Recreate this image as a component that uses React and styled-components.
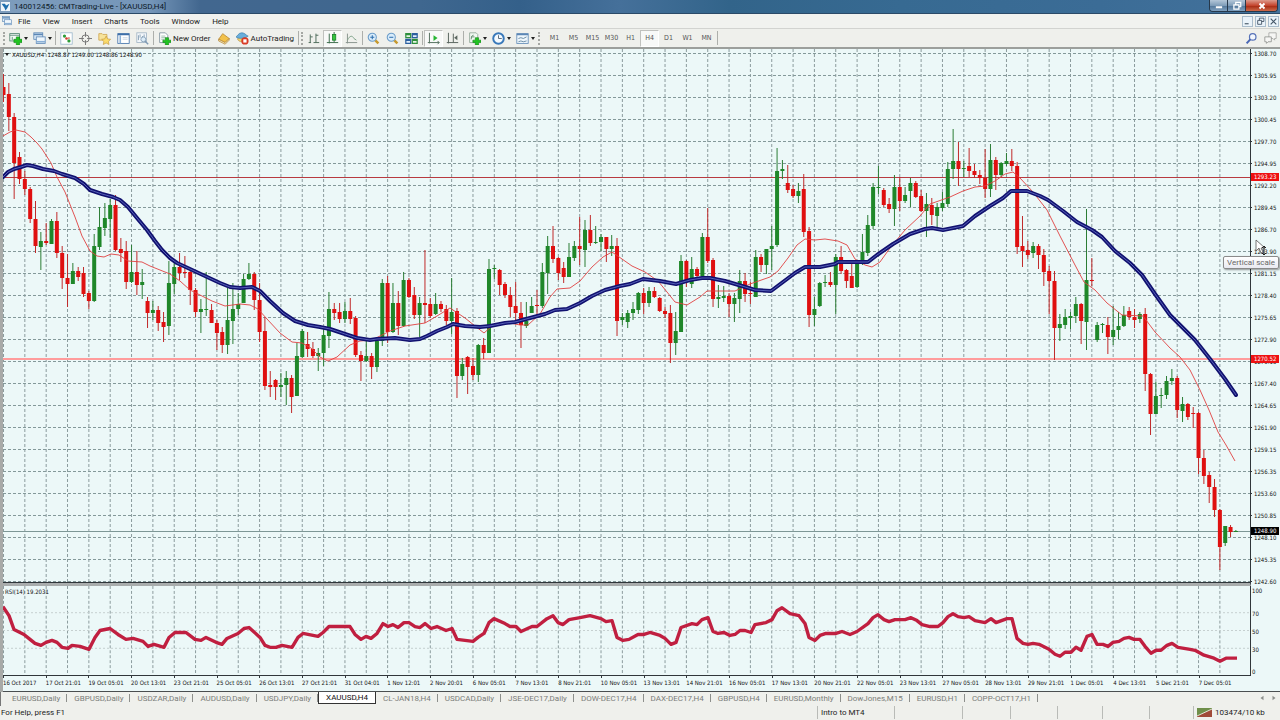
import React from 'react';
import styled, { createGlobalStyle } from 'styled-components';

const FACE = '#eff0ec';
const PAPER = '#ecf8f8';
const UI_FONT = "Roboto, 'Noto Sans', sans-serif";
const CHART_FONT = "'DejaVu Sans Condensed', 'DejaVu Sans', sans-serif";

const GlobalStyle = createGlobalStyle`
  * {
    box-sizing: border-box;
  }
  body {
    margin: 0;
    background: ${FACE};
    font-family: ${UI_FONT};
    font-size: 8px;
    color: #1c1c1c;
  }
  button {
    font: inherit;
    color: inherit;
    border: 0;
    padding: 0;
    background: none;
  }
  ul, ol {
    list-style: none;
    margin: 0;
    padding: 0;
  }
  svg {
    display: block;
  }
`;

// candle spacing on the chart, eight candles to one date label
const STEP = 5.335;
const FIRST_X = 3.5;

const PRICES = [
  '1308.70', '1305.95', '1303.20', '1300.45', '1297.70', '1294.95', '1292.20',
  '1289.45', '1286.70', '1283.90', '1281.15', '1278.40', '1275.65', '1272.90',
  '1270.15', '1267.40', '1264.65', '1261.90', '1259.15', '1256.35', '1253.60',
  '1250.85', '1248.10', '1245.35', '1242.60',
];

const DATES = [
  '16 Oct 2017', '17 Oct 21:01', '19 Oct 05:01', '20 Oct 13:01', '23 Oct 21:01',
  '25 Oct 05:01', '26 Oct 13:01', '27 Oct 21:01', '31 Oct 04:01', '1 Nov 12:01',
  '2 Nov 20:01', '6 Nov 05:01', '7 Nov 13:01', '8 Nov 21:01', '10 Nov 05:01',
  '13 Nov 13:01', '14 Nov 21:01', '16 Nov 05:01', '17 Nov 13:01', '20 Nov 21:01',
  '22 Nov 05:01', '23 Nov 13:01', '27 Nov 05:01', '28 Nov 13:01', '29 Nov 21:01',
  '1 Dec 05:01', '4 Dec 13:01', '5 Dec 21:01', '7 Dec 05:01',
];

// direction, high, body top, body bottom, low
const CANDLES = `
r 74 87 95 102|r 83 94 117 131|r 113 117 163 199|r 152 157 179 184|r 171 179 189 195|r 187 189 219 223
r 201 219 246 253|g 232 241 247 270|r 223 241 243 245|g 219 221 244 244|r 212 221 253 258|r 246 253 278 289
r 254 278 284 307|g 263 271 284 284|r 267 271 277 281|r 267 273 294 297|r 291 293 301 309|g 234 246 301 302
g 207 227 247 250|g 203 218 228 236|g 199 205 219 238|r 195 205 250 251|r 238 249 253 262|r 241 251 282 289
g 245 272 282 283|r 251 272 285 295|g 269 282 285 299|r 297 301 313 328|g 301 310 313 320|r 306 310 323 331
r 312 322 327 342|g 261 283 326 335|g 262 267 284 294|r 253 267 273 280|r 256 272 273 278|r 271 272 290 305
r 288 290 312 317|g 299 309 312 333|g 272 309 310 316|r 304 310 323 323|r 320 323 333 350|r 327 332 345 353
g 288 320 345 354|g 283 309 321 344|g 293 304 309 315|g 274 279 303 303|g 263 274 279 280|r 272 274 300 310
r 283 300 332 342|r 317 331 386 390|r 371 385 387 397|r 379 380 387 400|g 373 385 387 397|g 371 378 385 405
r 375 378 397 413|g 343 356 396 396|g 329 331 357 358|r 332 344 349 357|r 342 349 356 358|g 348 353 356 371
g 328 335 353 366|g 292 309 336 348|r 303 309 313 320|r 303 312 319 323|g 302 311 319 323|r 298 311 319 324
r 316 318 355 357|r 351 355 361 381|g 340 356 361 362|r 353 356 367 379|g 339 341 367 372|g 279 283 341 346
r 276 283 332 343|g 283 303 332 333|r 291 303 326 335|g 272 280 326 327|r 278 280 297 298|r 287 295 315 319
g 297 303 315 337|r 250 303 305 323|r 298 304 316 318|g 293 304 314 315|r 301 304 309 312|r 305 309 321 325
g 278 312 321 334|r 308 311 376 398|g 358 364 376 380|r 356 357 367 394|r 358 366 375 380|g 344 345 375 382
r 338 345 353 359|g 259 269 353 353|g 265 268 269 279|r 269 270 285 295|r 282 284 295 298|r 287 295 307 317
r 282 306 313 323|r 302 313 325 348|g 302 321 326 328|g 297 306 313 313|r 290 305 306 315|g 263 272 306 308
g 236 246 273 294|r 226 246 259 263|r 257 258 273 280|r 262 268 277 283|g 243 257 277 277|g 241 246 258 261
r 217 246 249 265|g 220 230 250 267|r 215 230 243 246|g 226 242 243 244|g 234 237 242 251|r 237 237 249 262
g 235 246 249 256|r 238 246 321 336|g 313 317 320 325|g 310 313 322 328|g 302 309 313 320|g 292 293 310 314
r 288 293 303 314|g 287 291 303 307|r 287 291 297 298|r 297 298 311 312|r 307 311 314 318|r 305 313 343 363
g 312 331 343 355|g 255 261 332 332|r 260 261 282 287|g 257 269 284 288|r 267 269 276 277|g 233 237 276 277
r 208 237 261 263|r 258 260 299 307|g 285 297 299 308|g 286 296 298 302|r 293 296 304 317|g 293 298 304 322
g 270 281 299 313|r 273 281 294 302|r 282 293 294 304|g 250 257 297 297|r 254 257 265 272|g 249 249 265 274
g 226 246 249 270|g 148 171 245 247|g 160 169 171 179|r 165 183 190 193|r 185 189 196 198|g 183 191 196 203
r 174 189 232 237|r 227 231 315 327|g 297 309 315 326|g 282 283 306 307|g 275 282 283 287|r 272 282 285 287
g 254 257 285 314|r 246 257 271 274|r 269 270 281 288|r 263 276 288 288|g 262 263 287 288|g 234 252 263 265
g 215 225 253 256|g 183 187 226 229|g 166 187 188 194|r 188 190 205 207|r 198 204 209 213|g 175 187 209 226
r 177 187 201 211|g 187 195 201 203|g 178 183 191 207|r 181 183 197 198|r 190 196 211 212|g 193 204 211 237
r 198 205 215 225|g 203 207 216 229|g 192 203 208 211|g 162 169 204 207|g 129 161 169 179|r 142 161 169 186
g 161 168 169 177|r 148 166 171 177|r 164 171 175 178|r 170 175 178 184|r 149 178 189 198|g 144 160 189 197
r 157 160 175 190|g 162 163 175 177|g 153 161 164 166|r 149 161 166 171|r 162 166 247 254|r 216 246 251 267
r 241 250 255 259|g 242 246 253 258|r 244 246 255 269|r 249 255 272 286|r 266 271 281 314|r 271 281 328 360
g 314 324 328 341|g 309 317 325 329|g 312 316 318 329|g 297 304 316 323|r 303 304 321 344|g 209 280 322 350
r 258 280 281 286|g 322 325 340 342|g 323 324 325 333|r 317 325 337 354|g 306 330 337 345|g 312 326 330 339
g 306 315 326 327|r 307 311 317 320|r 309 317 320 328|g 312 314 319 323|r 308 314 374 391|r 373 374 414 435
g 382 396 414 414|g 388 395 396 408|g 376 381 395 399|g 369 378 381 385|r 376 378 410 418|g 397 404 411 422
r 403 404 417 420|r 407 413 414 428|r 412 413 458 474|r 450 458 476 484|r 472 475 487 503|r 479 487 510 517
r 509 510 547 570|g 526 526 543 546|r 525 527 532 537|g 530 531 532 532
`
  .trim()
  .split(/[|\n]/)
  .map((row) => {
    const [dir, ...values] = row.split(' ');
    const [high, top, bottom, low] = values.map(Number);
    return { up: dir === 'g', high, top, bottom, low };
  });

const SLOW_MA =
  '3,177 8,172 14,169 21,167 27,165 33,166 43,169 54,171 62,174 75,178 84,184 90,190 102,194 113,197 120,200 128,207 137,218 147,230 155,241 162,250 170,258 177,263 190,269 205,276 220,283 230,287 240,288 252,287 260,291 270,301 283,313 295,321 308,325 320,327 330,329 345,334 357,338 370,340 377,339 395,338 410,340 420,339 427,336 437,331 447,327 453,324 465,326 480,327 490,326 505,323 515,322 530,318 545,314 555,310 567,309 580,303 592,296 605,290 620,286 630,284 643,279 660,281 676,284 690,280 702,278 710,278 725,281 742,286 755,290 771,291 783,282 795,273 805,267 820,267 835,264 838,262 860,262 868,262 877,255 893,244 910,234 925,229 932,228 943,230 963,226 975,216 990,206 1003,198 1011,191 1027,191 1040,196 1048,200 1063,211 1077,222 1092,230 1102,237 1115,251 1130,263 1142,275 1155,294 1170,315 1185,330 1195,340 1210,359 1225,379 1236,395';

const FAST_MA =
  '3,136 10,132 16,130 25,132 31,137 37,143 42,149 51,163 57,177 65,192 75,217 82,236 90,251 97,256 104,257 111,254 119,255 128,261 142,262 150,266 160,270 170,274 180,281 190,290 200,295 212,301 225,306 240,304 250,305 258,309 267,319 280,333 292,342 302,343 311,348 320,357 328,361 337,357 350,345 360,341 372,340 380,336 390,331 405,326 425,323 437,316 450,308 465,318 475,326 484,333 492,326 505,322 520,325 528,325 540,314 550,297 557,289 570,288 580,281 592,267 603,257 612,252 622,259 632,266 645,272 658,281 667,292 675,302 687,305 700,297 707,291 735,291 750,284 770,277 778,271 788,258 797,245 805,239 815,240 825,239 838,241 847,245 855,259 865,265 872,267 880,262 890,248 905,230 920,216 930,204 950,197 963,191 975,187 985,186 995,181 1005,174 1013,172 1020,178 1033,192 1047,210 1060,236 1075,265 1084,282 1095,290 1107,303 1122,315 1143,316 1155,332 1170,348 1180,357 1190,370 1200,390 1209,410 1218,432 1226,445 1235,461';

const RSI =
  '3,607 9,616 14,630 24,635 30,640 35,644 41,646 46,643 52,641 57,643 62,648 68,649 72,646 80,647 89,650 95,638 100,631 110,629 118,635 126,640 133,639 143,642 148,647 154,645 164,648 169,638 175,633 186,633 195,640 201,641 206,638 216,643 222,645 227,639 238,634 244,629 249,628 260,638 265,646 270,648 276,648 282,646 292,648 298,638 303,634 318,637 323,633 329,627 350,627 355,635 361,640 366,637 371,639 377,634 383,624 388,627 393,625 398,628 404,623 409,623 415,627 420,628 425,624 431,629 437,627 446,631 452,629 457,640 473,642 478,638 484,634 489,623 494,619 505,624 510,627 516,627 521,632 532,627 537,627 547,619 553,616 558,623 563,625 569,620 580,618 590,616 601,619 606,622 612,621 617,638 623,641 629,640 638,635 644,635 650,633 660,636 665,639 671,645 676,643 681,628 692,624 697,625 702,620 708,618 713,632 718,634 724,633 730,636 735,635 740,631 745,631 751,633 755,625 766,623 772,620 777,611 782,608 790,614 799,616 805,624 809,638 815,641 820,636 826,634 836,634 842,632 850,635 857,632 868,624 873,618 878,615 884,620 889,622 895,620 905,620 911,618 917,621 922,625 930,627 938,627 943,623 948,617 953,614 958,617 964,618 969,617 975,621 985,623 991,619 996,623 1007,619 1012,619 1017,639 1023,644 1028,645 1033,644 1039,645 1049,650 1055,655 1060,657 1065,653 1071,653 1076,648 1081,651 1087,637 1092,635 1097,645 1103,645 1108,647 1113,643 1119,642 1124,639 1129,638 1134,640 1140,640 1145,647 1151,654 1156,651 1161,651 1167,646 1172,644 1178,648 1190,650 1195,651 1204,656 1214,659 1220,662 1226,659 1237,659';

const MENU = ['File', 'View', 'Insert', 'Charts', 'Tools', 'Window', 'Help'];
const PERIODS = ['M1', 'M5', 'M15', 'M30', 'H1', 'H4', 'D1', 'W1', 'MN'];
const TABS = [
  'EURUSD,Daily', 'GBPUSD,Daily', 'USDZAR,Daily', 'AUDUSD,Daily', 'USDJPY,Daily',
  'XAUUSD,H4', 'CL-JAN18,H4', 'USDCAD,Daily', 'JSE-DEC17,Daily', 'DOW-DEC17,H4',
  'DAX-DEC17,H4', 'GBPUSD,H4', 'EURUSD,Monthly', 'DowJones,M15', 'EURUSD,H1',
  'COPP-OCT17,H1',
];

const Terminal = styled.div`
  min-height: 100vh;
  display: flex;
  flex-direction: column;
  background: ${FACE};
`;

const TitleBar = styled.header`
  height: 14px;
  display: flex;
  align-items: center;
  gap: 4px;
  padding-left: 1px;
  border-bottom: 1px solid #2b4a68;
  background: linear-gradient(90deg, #7d9cbc 0, #7596b9 150px, #42678f 200px, #3f678f 420px, #34608a 520px, #45709a 620px, #32648a 730px, #376a92 900px, #3b6c96 1100px, #44729c 100%);
`;

const Title = styled.h1`
  flex: 1;
  margin: 0;
  font-size: 8px;
  line-height: 13px;
  font-weight: 400;
  color: #0d1a28;
`;

const CaptionButtons = styled.div`
  align-self: flex-start;
  display: flex;
  height: 12px;
  margin-right: 2px;
  border: 1px solid #26384b;
  border-top: 0;
  border-radius: 0 0 4px 4px;
  overflow: hidden;
`;

const CaptionButton = styled.button`
  width: ${(p) => (p.$close ? 31 : 18)}px;
  display: grid;
  place-items: center;
  border-right: ${(p) => (p.$close ? 0 : '1px solid #26384b')};
  background: ${(p) =>
    p.$close
      ? 'linear-gradient(#dd9a8c, #c4452e 50%, #a82c14 55%, #cc6a4a)'
      : 'linear-gradient(#b3c6d8, #7f9db9 50%, #54789b 55%, #7fa0bf)'};
`;

const MenuBar = styled.nav`
  height: 14px;
  display: flex;
  align-items: center;
  padding-left: 2px;
  background: #f1f2ef;
`;

const MenuButton = styled.button`
  padding: 0 6px;
  line-height: 13px;
`;

const MenuItems = styled.div`
  flex: 1;
  display: flex;
`;

const ChildButtons = styled.div`
  display: flex;
  gap: 2px;
  padding-right: 1px;
`;

const ChildButton = styled.button`
  width: 11px;
  height: 11px;
  display: grid;
  place-items: center;
  border: 1px solid #a9bccb;
  background: #eaf3fa;
`;

const ToolBar = styled.div`
  height: 19px;
  display: flex;
  align-items: center;
  padding-left: 2px;
  border-top: 1px solid #d2d3d0;
  background: ${FACE};
`;

const Grip = styled.span`
  width: 2px;
  height: 13px;
  margin: 0 1px;
  border-left: 2px dotted #a5a7a3;
`;

const Divider = styled.span`
  width: 1px;
  height: 14px;
  margin: 0 1px;
  background: #adafab;
`;

const ToolButton = styled.button`
  width: ${(p) => (p.$menu ? 24 : 19)}px;
  height: 17px;
  display: flex;
  align-items: center;
  justify-content: center;
  gap: 2px;
  border: 1px solid ${(p) => (p.$pressed ? '#c0c1be' : 'transparent')};
  border-right-color: ${(p) => (p.$pressed ? '#ffffff' : 'transparent')};
  border-bottom-color: ${(p) => (p.$pressed ? '#ffffff' : 'transparent')};
  background: ${(p) => (p.$pressed ? '#f8f9f8' : 'none')};
`;

const PeriodGroup = styled.div`
  display: flex;
  padding-left: 4px;
`;

const PeriodButton = styled(ToolButton)`
  font-family: ${CHART_FONT};
  font-size: 7px;
  color: #555;
`;

const LabelButton = styled(ToolButton)`
  width: auto;
  padding: 0 2px;
  line-height: 15px;
`;

const Spacer = styled.span`
  flex: 1;
`;

const Arrow = styled.span`
  border: 2px solid transparent;
  border-top: 3px solid #222;
  border-bottom: 0;
`;

const ChartWindow = styled.main`
  position: relative;
  flex: 1;
  display: grid;
  grid-template-columns: minmax(0, 1fr) 29px;
  grid-template-rows: 1fr 90px 16px;
  border-top: 2px solid #9c9f9c;
  border-left: 3px solid #a8aaa8;
  background: ${PAPER};
  font-family: ${CHART_FONT};
  font-size: 6px;
  color: #111;
`;

const Pane = styled.section`
  position: relative;
  min-height: 0;
  border-right: 1px solid #30363a;
`;

const PricePane = styled(Pane)`
  border-bottom: 3px solid #a9adad;
  box-shadow: inset 0 -1px #30363a;
`;

const RsiPane = styled(Pane)`
  border-bottom: 1px solid #30363a;
`;

const Plot = styled.svg`
  width: 100%;
  height: 100%;
`;

const PaneLabel = styled.h2`
  position: absolute;
  top: 1px;
  left: 2px;
  display: flex;
  align-items: center;
  gap: 3px;
  margin: 0;
  font-size: 6px;
  line-height: 9px;
  font-weight: 400;
  white-space: pre;
`;

const PriceAxis = styled.ol`
  position: relative;
  display: flex;
  flex-direction: column;
  justify-content: space-between;
`;

const PriceTick = styled.li`
  display: flex;
  align-items: center;
  gap: 2px;
  line-height: 9px;

  &::before {
    content: '';
    width: 1px;
    height: 1px;
    background: #30363a;
  }
`;

const PriceTag = styled.span`
  position: absolute;
  left: 0;
  top: ${(p) => p.$at}%;
  width: 28px;
  padding-left: 3px;
  line-height: 8px;
  color: #fff;
  background: ${(p) => p.$color};
`;

const RsiAxis = styled.ol`
  display: grid;
  grid-template-rows: repeat(5, 1fr);
  align-items: center;
  padding-left: 1px;
  line-height: 9px;

  li:first-child {
    align-self: start;
  }
  li:last-child {
    align-self: end;
  }
`;

const DateAxis = styled.ol`
  grid-column: 1 / -1;
  display: flex;
  line-height: 10px;
  border-bottom: 1px solid #4a4e50;
`;

const DateTick = styled.li`
  flex: 0 0 3.345%;
  white-space: nowrap;

  &::before {
    content: '';
    display: block;
    width: 1px;
    height: 2px;
    background: #30363a;
  }
`;

const Tooltip = styled.div`
  position: absolute;
  right: 1px;
  top: 207px;
  padding: 0 3px;
  border: 1px solid #8a8a8a;
  border-radius: 2px;
  background: linear-gradient(#fff, #e9eaf1);
  box-shadow: 1px 1px 2px #0006;
  font-family: ${UI_FONT};
  font-size: 8px;
  line-height: 11px;
  color: #666;
`;

const Pointer = styled.svg`
  position: absolute;
  right: 13px;
  top: 190px;
`;

const TabStrip = styled.nav`
  height: 14px;
  display: flex;
  align-items: flex-start;
  padding-left: 4px;
  border-left: 1px solid #777;
`;

const Tab = styled.button`
  position: relative;
  height: 12px;
  padding: 0 7px;
  line-height: 11px;
  white-space: nowrap;
  color: ${(p) => (p.$active ? '#111' : '#7b7d7a')};
  background: ${(p) => (p.$active ? '#fff' : 'none')};
  border: 0 solid #333;
  border-width: ${(p) => (p.$active ? '0 1px 1px' : 0)};

  &::after {
    content: '';
    display: ${(p) => (p.$active ? 'none' : 'block')};
    position: absolute;
    right: 0;
    top: 2px;
    height: 8px;
    border-right: 1px solid #8d8f8c;
  }
`;

const StatusBar = styled.footer`
  height: 14px;
  display: flex;
  align-items: flex-start;
  line-height: 13px;
`;

const StatusCell = styled.span`
  flex: ${(p) => (p.$width ? `0 0 ${p.$width}px` : 1)};
  height: 13px;
  display: flex;
  align-items: center;
  gap: 3px;
  padding-left: ${(p) => (p.$width ? 3 : 1)}px;
  border-left: ${(p) => (p.$width ? '1px solid #b9bbb7' : 0)};
`;

const Icon = ({ size = 13, children }) => (
  <svg width={size} height={size} viewBox="0 0 16 16" fill="none" aria-hidden="true">
    {children}
  </svg>
);

const ICONS = {
  newChart: (
    <>
      <rect x="1" y="2" width="12" height="9" fill="#f4faf6" stroke="#4c7f6b" />
      <path d="M1 4h12M4 6v4" stroke="#4c7f6b" />
      <path d="M6 9h3V6h4v3h3v4h-3v3H9v-3H6z" fill="#21c321" stroke="#0a7d12" strokeWidth=".7" />
    </>
  ),
  profiles: (
    <>
      <rect x="1" y="1" width="11" height="8" fill="#dcebf8" stroke="#5b86b5" />
      <path d="M1 3h11" stroke="#5b86b5" strokeWidth="2" />
      <rect x="4" y="6" width="11" height="8" fill="#eef6fc" stroke="#5b86b5" />
      <path d="M4 12h11" stroke="#8bb0d6" strokeWidth="2" />
    </>
  ),
  market: (
    <>
      <rect x="1" y="1" width="14" height="14" fill="#fff" stroke="#9bb8cc" />
      <circle cx="5.500" cy="5" r="2" fill="#2c9c38" />
      <circle cx="8" cy="8" r="1.600" fill="#d23b2c" />
      <circle cx="11" cy="11" r="2" fill="#2c9c38" />
      <circle cx="11" cy="7.500" r="1" fill="#d23b2c" />
    </>
  ),
  cross: (
    <>
      <circle cx="8" cy="8" r="4.500" stroke="#777" strokeWidth="1.200" />
      <path d="M8 0v6M8 10v6M0 8h6M10 8h6" stroke="#777" strokeWidth="1.200" />
    </>
  ),
  navigator: (
    <>
      <path d="M1 2h4l1 1h5v7H1z" fill="#f7e39a" stroke="#cfa650" />
      <path d="M10 5l1.800 3.500 3.700.5-2.700 2.600.7 3.800L10 13.500l-3.500 1.900.7-3.800L4.500 9l3.700-.5z" fill="#fbdb6b" stroke="#c4983c" strokeWidth=".8" />
    </>
  ),
  terminal: (
    <>
      <rect x="1" y="2" width="14" height="12" fill="#fff" stroke="#3d6ea8" />
      <path d="M1 3h14" stroke="#3d6ea8" strokeWidth="2" />
      <path d="M4 4v10" stroke="#8bb0d6" strokeWidth="2" />
      <path d="M7 7h6M7 9h6" stroke="#c3d2e0" />
    </>
  ),
  tester: (
    <>
      <rect x="1" y="1" width="12" height="12" fill="#f3f7fa" stroke="#9fb2c3" />
      <path d="M3 4v6M5 3v4M8 5v5M10 3v3" stroke="#7893ab" />
      <circle cx="9" cy="9" r="3" fill="#dcecf8" stroke="#7f9ab3" />
      <path d="M11 11l4 4" stroke="#7f9ab3" strokeWidth="1.800" />
    </>
  ),
  order: (
    <>
      <path d="M2 1h7l3 3v9H2z" fill="#fff" stroke="#7a8c99" />
      <path d="M4 5h5M4 7h6M4 9h4" stroke="#8fb3a0" />
      <path d="M6 10h3V7h4v3h3v3h-3v3H9v-3H6z" fill="#21c321" stroke="#0a7d12" strokeWidth=".7" />
    </>
  ),
  book: (
    <>
      <path d="M2 9l5-7 8 6-5 5z" fill="#f2c14b" stroke="#b98733" />
      <path d="M2 9v2l8 4 5-5V8l-5 5z" fill="#fbeec0" stroke="#a8721c" strokeWidth=".8" />
    </>
  ),
  auto: (
    <>
      <path d="M2 9c2 4 8 4 10 0l-1-3H3z" fill="#f0cf6c" stroke="#b08a34" strokeWidth=".8" />
      <path d="M0 6c2-1 3-5 7-5s5 3 8 4c-3 3-12 4-15 1z" fill="#69aedb" stroke="#3b7cab" strokeWidth=".8" />
      <circle cx="11" cy="11" r="4.500" fill="#d93a25" />
      <rect x="9" y="9" width="4" height="4" fill="#fff" />
    </>
  ),
  bars: <path d="M4 3v10M2 13h3M4 6h3M11 2v11M8 13h7M11 4h3" stroke="#4f6d5c" strokeWidth="1.200" />,
  candles: (
    <>
      <path d="M4 2v12M1 13h14M10 0v13" stroke="#3f6e4e" strokeWidth="1.200" />
      <rect x="8" y="3" width="4" height="7" fill="#35c63d" stroke="#18802a" />
    </>
  ),
  line: (
    <>
      <path d="M3 2v12M1 13h14" stroke="#8a958e" strokeWidth="1.200" />
      <path d="M3 10c3-6 6-6 8-2l3 2" stroke="#7fa38a" strokeWidth="1.200" />
    </>
  ),
  zoomIn: (
    <>
      <path d="M10 10l4 4" stroke="#c79a2e" strokeWidth="3" />
      <circle cx="6.500" cy="6.500" r="5" fill="#d8ecfb" stroke="#6b9cc9" strokeWidth="1.300" />
      <path d="M4 6.500h5M6.500 4v5" stroke="#2e6fae" strokeWidth="1.300" />
    </>
  ),
  zoomOut: (
    <>
      <path d="M10 10l4 4" stroke="#c79a2e" strokeWidth="3" />
      <circle cx="6.500" cy="6.500" r="5" fill="#d8ecfb" stroke="#6b9cc9" strokeWidth="1.300" />
      <path d="M4 6.500h5" stroke="#2e6fae" strokeWidth="1.300" />
    </>
  ),
  tile: (
    <>
      <path d="M1 2h6v5H1zM9 9h6v5H9z" fill="#e5f5e2" stroke="#2f8f3c" strokeWidth="1.500" />
      <path d="M9 2h6v5H9zM1 9h6v5H1z" fill="#e1eefb" stroke="#2c5f9e" strokeWidth="1.500" />
      <path d="M1 3h6M9 10h6" stroke="#2f8f3c" strokeWidth="2" />
      <path d="M9 3h6M1 10h6" stroke="#2c5f9e" strokeWidth="2" />
    </>
  ),
  scroll: (
    <>
      <path d="M3 1v13M1 13h14M13 11l2 2-2 2" stroke="#54705f" strokeWidth="1.200" />
      <path d="M8 4l5 3.500L8 11z" fill="#26b532" />
    </>
  ),
  shift: (
    <>
      <path d="M3 1v13M1 13h14M9 2v11" stroke="#5a665f" strokeWidth="1.200" />
      <path d="M14 4v6l-4-3z" fill="#5a665f" />
    </>
  ),
  indicator: (
    <>
      <path d="M2 1h8l2 2v10H2z" fill="#f1f8f2" stroke="#8aa292" />
      <path d="M4 9c0-5 2-5 3-5M4 6h4" stroke="#4d7c5c" />
      <path d="M6 10h3V7h4v3h3v3h-3v3H9v-3H6z" fill="#21c321" stroke="#0a7d12" strokeWidth=".7" />
    </>
  ),
  clock: (
    <>
      <circle cx="8" cy="8" r="6.500" fill="#f4faff" stroke="#3a79ba" strokeWidth="2.400" />
      <path d="M8 4v4h4" stroke="#5c6b7a" strokeWidth="1.200" />
    </>
  ),
  template: (
    <>
      <rect x="1" y="2" width="14" height="12" fill="#eef6fc" stroke="#5b86b5" />
      <path d="M1 3h14" stroke="#5b86b5" strokeWidth="2" />
      <path d="M3 8l3-1 3 1 4-2M3 12l3-1 3 1 4-1" stroke="#547a96" />
    </>
  ),
  search: (
    <>
      <circle cx="9.500" cy="6" r="4" fill="#f2f6fd" stroke="#5672b8" strokeWidth="1.500" />
      <path d="M6.500 9L2 14" stroke="#4866b4" strokeWidth="2.400" />
    </>
  ),
  chat: (
    <>
      <path d="M6 1h9v7h-2v2l-2-2H6z" fill="#f6f6f4" stroke="#a2a4a1" />
      <path d="M1 6h8v6H5l-2 2v-2H1z" fill="#f6f6f4" stroke="#8e908d" />
    </>
  ),
};

const Tool = ({ icon, label, menu, pressed }) => (
  <ToolButton type="button" aria-label={label} $menu={menu} $pressed={pressed}>
    <Icon>{ICONS[icon]}</Icon>
    {menu && <Arrow />}
  </ToolButton>
);

const candleX = (i) => FIRST_X + i * STEP;

const VerticalGrid = ({ top, bottom }) => (
  <g stroke="#8b9b9d" strokeDasharray="3 2">
    {Array.from({ length: 58 }, (_, k) => (
      <line key={k} x1={candleX(k * 4)} x2={candleX(k * 4)} y1={top} y2={bottom} />
    ))}
  </g>
);

const Candle = ({ x, candle }) => {
  const color = candle.up ? '#1f8729' : '#df1010';
  return (
    <g>
      <line x1={x} x2={x} y1={candle.high} y2={candle.low} stroke={candle.up ? '#2b7d35' : '#c02a2a'} />
      <rect
        x={x - 2}
        y={candle.top}
        width="4"
        height={Math.max(1, candle.bottom - candle.top)}
        fill={color}
      />
    </g>
  );
};

const PriceChart = () => (
  <Plot viewBox="3 49 1247 534" preserveAspectRatio="none" fill="none" role="img" aria-label="XAUUSD price">
    <VerticalGrid top={49} bottom={583} />
    <g stroke="#84999a" strokeDasharray="3 2">
      {PRICES.map((price, i) => (
        <line key={price} x1="3" x2="1250" y1={53.5 + i * 22} y2={53.5 + i * 22} />
      ))}
    </g>
    <path d="M3 177.500H1250" stroke="#b83a40" />
    <path d="M3 359H1250" stroke="#ff9c9c" strokeWidth="2" />
    <path d="M3 531.500H1250" stroke="#7d9796" />
    {CANDLES.map((candle, i) => (
      <Candle key={i} x={candleX(i)} candle={candle} />
    ))}
    <polyline points={FAST_MA} stroke="#e04040" strokeWidth=".9" />
    <polyline points={SLOW_MA} stroke="#11116f" strokeWidth="4" strokeLinejoin="round" strokeLinecap="round" />
    <polyline points={SLOW_MA} stroke="#5560b8" strokeWidth="1" />
  </Plot>
);

const RsiChart = () => (
  <Plot viewBox="3 586 1247 90" preserveAspectRatio="none" fill="none" role="img" aria-label="RSI">
    <VerticalGrid top={586} bottom={676} />
    <path d="M3 613H1250M3 631H1250M3 649H1250" stroke="#c6d0d0" strokeDasharray="2 2" />
    <polyline points={RSI} stroke="#c01f40" strokeWidth="3.400" strokeLinejoin="round" />
  </Plot>
);

class App extends React.Component {
  state = { tab: 'XAUUSD,H4', period: 'H4' };

  renderMenu = () => {
    return (
      <MenuBar>
        <Icon size={10}>{ICONS.profiles}</Icon>
        <MenuItems>
          {MENU.map((item) => (
            <MenuButton type="button" key={item}>
              {item}
            </MenuButton>
          ))}
        </MenuItems>
        <ChildButtons>
          <ChildButton type="button" aria-label="Minimize chart">
            <Icon size={9}>
              <path d="M3 12h7" stroke="#456" strokeWidth="2" />
            </Icon>
          </ChildButton>
          <ChildButton type="button" aria-label="Restore chart">
            <Icon size={9}>
              <path d="M6 6V2h8v6h-4M3 6h7v7H3z" stroke="#456" strokeWidth="1.600" />
            </Icon>
          </ChildButton>
          <ChildButton type="button" aria-label="Close chart">
            <Icon size={9}>
              <path d="M3 3l10 10M13 3L3 13" stroke="#456" strokeWidth="2" />
            </Icon>
          </ChildButton>
        </ChildButtons>
      </MenuBar>
    );
  };

  renderToolbar = () => {
    return (
      <ToolBar>
        <Grip />
        <Tool icon="newChart" label="New chart" menu />
        <Tool icon="profiles" label="Profiles" menu />
        <Divider />
        <Tool icon="market" label="Market Watch" />
        <Tool icon="cross" label="Data Window" />
        <Tool icon="navigator" label="Navigator" />
        <Tool icon="terminal" label="Terminal" />
        <Tool icon="tester" label="Strategy Tester" />
        <Divider />
        <LabelButton type="button">
          <Icon>{ICONS.order}</Icon>
          New Order
        </LabelButton>
        <Tool icon="book" label="MetaEditor" />
        <LabelButton type="button">
          <Icon>{ICONS.auto}</Icon>
          AutoTrading
        </LabelButton>
        <Divider />
        <Grip />
        <Tool icon="bars" label="Bar chart" />
        <Tool icon="candles" label="Candlesticks" pressed />
        <Tool icon="line" label="Line chart" />
        <Divider />
        <Tool icon="zoomIn" label="Zoom in" />
        <Tool icon="zoomOut" label="Zoom out" />
        <Tool icon="tile" label="Tile windows" />
        <Divider />
        <Tool icon="scroll" label="Auto scroll" pressed />
        <Tool icon="shift" label="Chart shift" />
        <Divider />
        <Tool icon="indicator" label="Indicators" menu />
        <Tool icon="clock" label="Periods" menu />
        <Tool icon="template" label="Templates" menu />
        <Grip />
        <PeriodGroup>
          {PERIODS.map((period) => (
            <PeriodButton
              type="button"
              key={period}
              $pressed={period === this.state.period}
              onClick={() => this.setState({ period })}
            >
              {period}
            </PeriodButton>
          ))}
        </PeriodGroup>
        <Divider />
        <Spacer />
        <Tool icon="search" label="Search" />
        <Tool icon="chat" label="Chat" />
      </ToolBar>
    );
  };

  renderChart = () => {
    return (
      <ChartWindow>
        <PricePane>
          <PriceChart />
          <PaneLabel>
            <Arrow />
            {'XAUUSD,H4  1248.87 1249.00 1248.86 1248.90'}
          </PaneLabel>
        </PricePane>
        <PriceAxis>
          {PRICES.map((price) => (
            <PriceTick key={price}>{price}</PriceTick>
          ))}
          <PriceTag $at={23} $color="#ee1111">1293.23</PriceTag>
          <PriceTag $at={57} $color="#ee1111">1270.52</PriceTag>
          <PriceTag $at={89} $color="#000">1248.90</PriceTag>
        </PriceAxis>
        <RsiPane>
          <RsiChart />
          <PaneLabel>RSI(14) 19.2031</PaneLabel>
        </RsiPane>
        <RsiAxis>
          <li>100</li>
          <li>70</li>
          <li>50</li>
          <li>30</li>
          <li>0</li>
        </RsiAxis>
        <DateAxis>
          {DATES.map((date) => (
            <DateTick key={date}>{date}</DateTick>
          ))}
        </DateAxis>
        <Pointer width="12" height="18" viewBox="0 0 12 18" aria-hidden="true">
          <path d="M1 1v11l3-3 2 5 2-1-2-4h4z" fill="#fff" stroke="#555" strokeWidth=".8" />
          <path d="M9 7v9M7 9l2-2 2 2M7 14l2 2 2-2" fill="none" stroke="#222" />
        </Pointer>
        <Tooltip role="tooltip">Vertical scale</Tooltip>
      </ChartWindow>
    );
  };

  render() {
    return (
      <Terminal>
        <GlobalStyle />
        <TitleBar>
          <Icon size={9}>
            <rect width="16" height="16" fill="#eef5fb" />
            <path d="M1 3h6l2 3 6-3-4 8-3 4-2-5z" fill="#1f6fae" />
          </Icon>
          <Title>140012456: CMTrading-Live - [XAUUSD,H4]</Title>
          <CaptionButtons>
            <CaptionButton type="button" aria-label="Minimize">
              <Icon size={10}>
                <path d="M3 10h10" stroke="#fff" strokeWidth="3" />
              </Icon>
            </CaptionButton>
            <CaptionButton type="button" aria-label="Restore">
              <Icon size={10}>
                <path d="M6 5V2h8v7h-3M3 6h8v7H3z" stroke="#fff" strokeWidth="2" />
              </Icon>
            </CaptionButton>
            <CaptionButton type="button" aria-label="Close" $close>
              <Icon size={10}>
                <path d="M4 4l8 8M12 4l-8 8" stroke="#fff" strokeWidth="3" />
              </Icon>
            </CaptionButton>
          </CaptionButtons>
        </TitleBar>
        {this.renderMenu()}
        {this.renderToolbar()}
        {this.renderChart()}
        <TabStrip>
          {TABS.map((tab) => (
            <Tab
              type="button"
              key={tab}
              $active={tab === this.state.tab}
              onClick={() => this.setState({ tab })}
            >
              {tab}
            </Tab>
          ))}
          <Spacer />
          <Icon size={12}>
            <path d="M10 5v6L6 8z" fill="#8c8e8b" />
          </Icon>
          <Icon size={12}>
            <path d="M6 5v6l4-3z" fill="#8c8e8b" />
          </Icon>
        </TabStrip>
        <StatusBar>
          <StatusCell>For Help, press F1</StatusCell>
          <StatusCell $width={77}>Intro to MT4</StatusCell>
          <StatusCell $width={68} />
          <StatusCell $width={48} />
          <StatusCell $width={47} />
          <StatusCell $width={45} />
          <StatusCell $width={47} />
          <StatusCell $width={44} />
          <StatusCell $width={87}>
            <svg width="15" height="9" viewBox="0 0 15 9" aria-hidden="true">
              <path d="M0 0h15v9H0z" fill="#a04a38" />
              <path d="M0 0h15v1L0 8z" fill="#6f8f4a" />
              <path d="M0 8L15 1" stroke="#dfe5d6" />
            </svg>
            103474/10 kb
          </StatusCell>
        </StatusBar>
      </Terminal>
    );
  }
}

export default App;
